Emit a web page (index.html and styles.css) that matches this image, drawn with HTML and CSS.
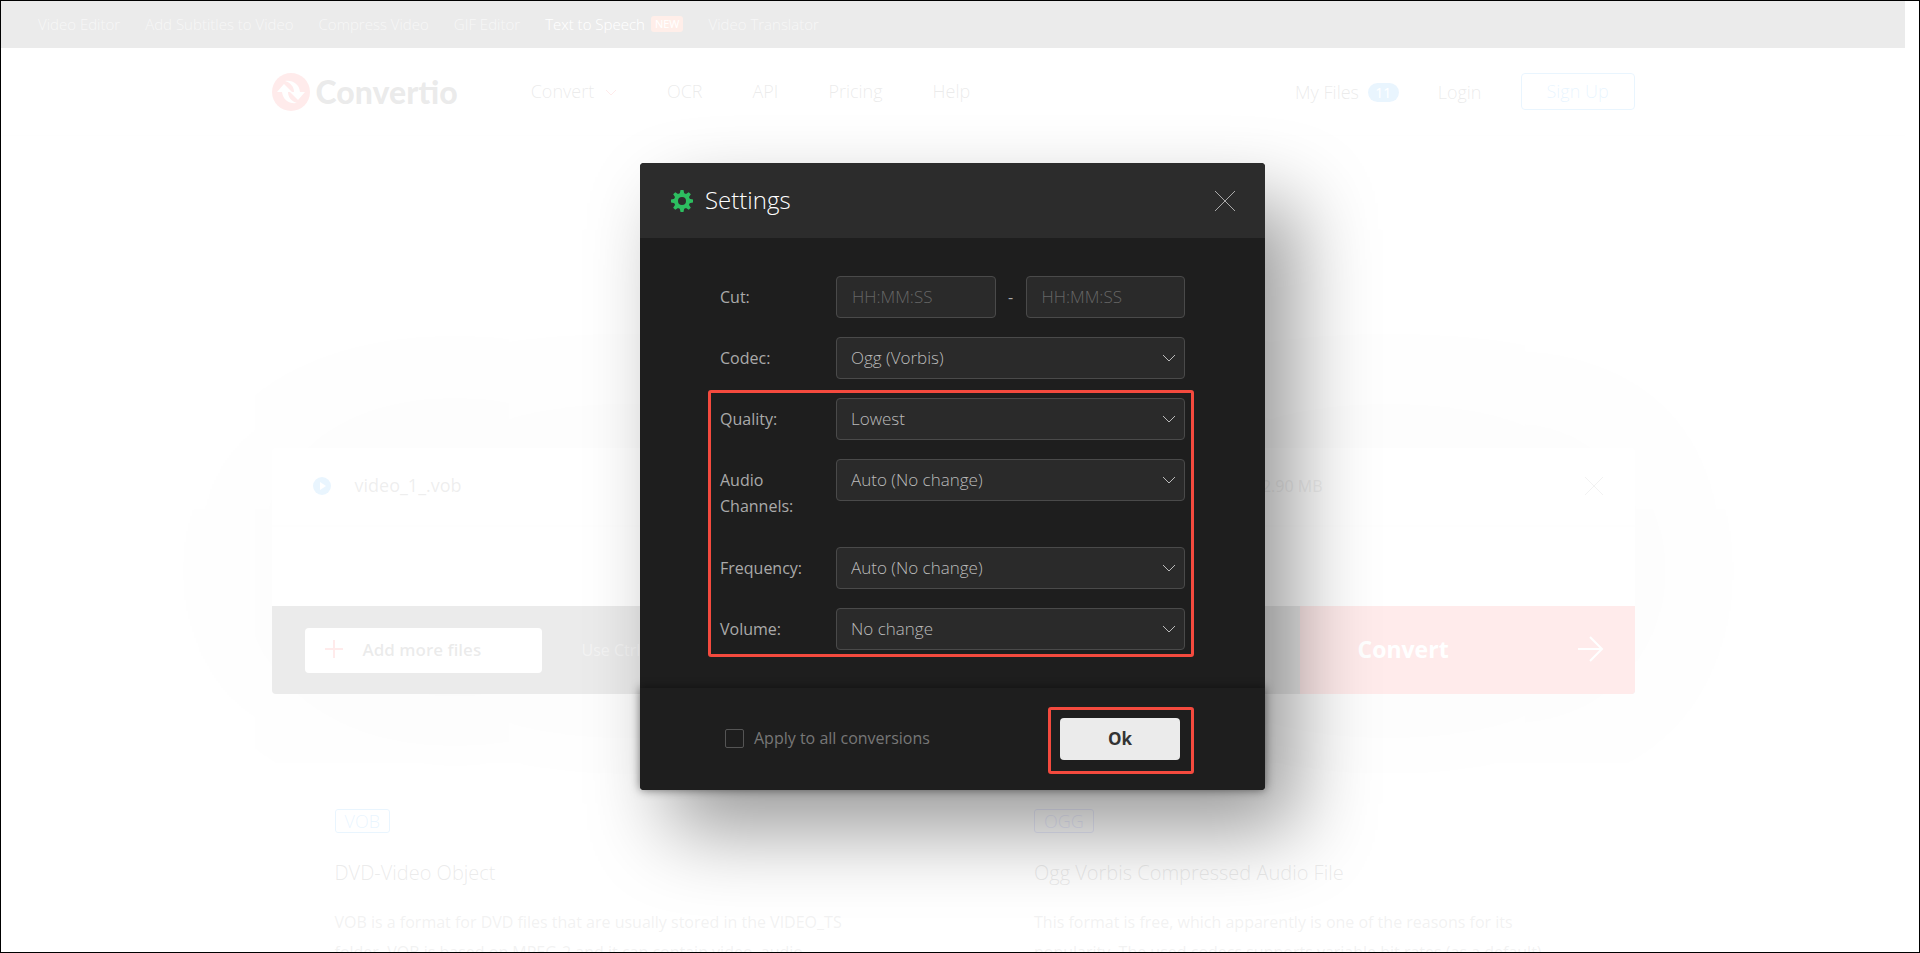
FILE: index.html
```html
<!DOCTYPE html>
<html lang="en">
<head>
  <meta charset="UTF-8">
  <title>VOB to OGG - Convertio</title>
  <link rel="stylesheet" href="styles.css">
</head>
<body>
  <div class="frame">
    <div class="page">
      <!-- Top bar -->
      <nav class="topbar">
        <a href="#">Video Editor</a>
        <a href="#">Add Subtitles to Video</a>
        <a href="#">Compress Video</a>
        <a href="#">GIF Editor</a>
        <a href="#" class="active">Text to Speech <span class="new">NEW</span></a>
        <a href="#">Video Translator</a>
      </nav>

      <!-- Header -->
      <header class="header">
        <div class="container header-row">
          <a href="#" class="logo">
            <svg width="38" height="38" viewBox="0 0 38 38">
              <circle cx="19" cy="19" r="19" fill="#ff3333"/>
              <path fill="#fff" d="M13 8c8-1 14 3 15 11h5l-7 8-8-8h4c0-5-3-9-9-11z"/>
              <path fill="#fff" d="M25 30c-8 1-14-3-15-11H5l7-8 8 8h-4c0 5 3 9 9 11z"/>
            </svg>
            <span>Convertio</span>
          </a>
          <nav class="menu">
            <a href="#">Convert
              <svg width="12" height="8" viewBox="0 0 12 8"><path d="M1 1l5 5 5-5" fill="none" stroke="#ff3333"/></svg>
            </a>
            <a href="#">OCR</a>
            <a href="#">API</a>
            <a href="#">Pricing</a>
            <a href="#">Help</a>
          </nav>
          <nav class="account">
            <a href="#">My Files <span class="count">11</span></a>
            <a href="#">Login</a>
            <a href="#" class="signup">Sign Up</a>
          </nav>
        </div>
      </header>

      <!-- File list -->
      <main class="container">
        <div class="files">
          <div class="file-row">
            <svg width="18" height="18" viewBox="0 0 18 18"><circle cx="9" cy="9" r="9" fill="#2196f3"/><path d="M7 5l6 4-6 4z" fill="#fff"/></svg>
            <span class="file-name">video_1_.vob</span>
            <span class="file-size">2.90 MB</span>
            <svg width="18" height="18" viewBox="0 0 18 18"><path d="M0 0l18 18M18 0L0 18" stroke="#777"/></svg>
          </div>
          <div class="file-space"></div>
          <div class="file-bar">
            <button class="add">
              <svg width="18" height="18" viewBox="0 0 18 18"><path d="M9 0v18M0 9h18" stroke="#ff3333" stroke-width="2"/></svg>
              Add more files
            </button>
            <span class="hint">Use Ctrl or Shift to add several files at once</span>
            <button class="convert">
              Convert
              <svg width="26" height="26" viewBox="0 0 26 26"><path d="M0 13h24M12 1l12 12-12 12" fill="none" stroke="#fff" stroke-width="2"/></svg>
            </button>
          </div>
        </div>

        <!-- Formats -->
        <div class="formats">
          <section class="format">
            <a href="#" class="tag">VOB</a>
            <h3>DVD-Video Object</h3>
            <p>VOB is a format for DVD files that are usually stored in the VIDEO_TS folder. VOB is based on MPEG-2 and it can contain video, audio,</p>
          </section>
          <section class="format">
            <a href="#" class="tag ogg">OGG</a>
            <h3>Ogg Vorbis Compressed Audio File</h3>
            <p>This format is free, which apparently is one of the reasons for its popularity. The used codecs supports variable bit rates (as a default)</p>
          </section>
        </div>
      </main>
    </div>

    <!-- Settings dialog -->
    <div class="overlay">
      <form class="modal">
        <div class="modal-header">
          <svg class="gear" width="22" height="22" viewBox="0 0 22 22">
            <g fill="#2dbe60">
              <path d="M9.5 0h3l1 5h-5zM9.5 22h3l1-5h-5zM0 9.5v3l5 1v-5zM22 9.5v3l-5 1v-5z"/>
              <path d="M9.5 0h3l1 5h-5zM9.5 22h3l1-5h-5zM0 9.5v3l5 1v-5zM22 9.5v3l-5 1v-5z" transform="rotate(45 11 11)"/>
            </g>
            <circle cx="11" cy="11" r="6" fill="none" stroke="#2dbe60" stroke-width="4"/>
          </svg>
          <h2>Settings</h2>
          <button type="button" class="close" aria-label="Close">
            <svg width="20" height="20" viewBox="0 0 20 20"><path d="M0 0l20 20M20 0L0 20" stroke="#aaa"/></svg>
          </button>
        </div>

        <div class="modal-body">
          <div class="row">
            <label for="cut-from">Cut:</label>
            <div class="cut">
              <input type="text" id="cut-from" placeholder="HH:MM:SS">
              <span>-</span>
              <input type="text" aria-label="Cut end" placeholder="HH:MM:SS">
            </div>
          </div>
          <div class="row">
            <label for="codec">Codec:</label>
            <div class="select">
              <select id="codec"><option>Ogg (Vorbis)</option></select>
              <svg width="14" height="8" viewBox="0 0 14 8"><path d="M1 1l6 6 6-6"/></svg>
            </div>
          </div>
          <div class="group">
            <div class="row">
              <label for="quality">Quality:</label>
              <div class="select">
                <select id="quality"><option>Lowest</option></select>
                <svg width="14" height="8" viewBox="0 0 14 8"><path d="M1 1l6 6 6-6"/></svg>
              </div>
            </div>
            <div class="row">
              <label for="channels">Audio Channels:</label>
              <div class="select">
                <select id="channels"><option>Auto (No change)</option></select>
                <svg width="14" height="8" viewBox="0 0 14 8"><path d="M1 1l6 6 6-6"/></svg>
              </div>
            </div>
            <div class="row">
              <label for="frequency">Frequency:</label>
              <div class="select">
                <select id="frequency"><option>Auto (No change)</option></select>
                <svg width="14" height="8" viewBox="0 0 14 8"><path d="M1 1l6 6 6-6"/></svg>
              </div>
            </div>
            <div class="row">
              <label for="volume">Volume:</label>
              <div class="select">
                <select id="volume"><option>No change</option></select>
                <svg width="14" height="8" viewBox="0 0 14 8"><path d="M1 1l6 6 6-6"/></svg>
              </div>
            </div>
          </div>
        </div>

        <div class="modal-footer">
          <label class="apply"><input type="checkbox"> Apply to all conversions</label>
          <div class="ok-box"><button type="button" class="ok">Ok</button></div>
        </div>
      </form>
    </div>
  </div>
</body>
</html>
```
FILE: styles.css
```css
* {
  box-sizing: border-box;
}

body {
  margin: 0;
  font-family: "Open Sans", sans-serif;
  font-size: 16px;
  color: #333;
  background: #fff;
}

a {
  color: inherit;
  text-decoration: none;
}

button,
input,
select {
  font-family: inherit;
}

.frame {
  position: relative;
  height: 100vh;
  border: 1px solid #000;
  overflow: hidden;
}

.page {
  margin-right: 14px;
}

.container {
  max-width: 1363px;
  margin: 0 auto;
}

/* top bar */
.topbar {
  display: flex;
  align-items: center;
  gap: 25px;
  height: 47px;
  padding: 0 37px 2px;
  background: #333;
  color: #aaa;
  font-size: 15px;
  font-weight: 300;
}

.topbar .active {
  color: #fff;
  display: flex;
  align-items: center;
  gap: 6px;
}

.new {
  padding: 0 4px;
  border-radius: 3px;
  background: #ff5722;
  font-size: 11px;
  font-weight: 400;
  line-height: 16px;
}

/* header */
.header {
  border-bottom: 1px solid #eee;
}

.header-row {
  display: flex;
  align-items: center;
  height: 87px;
  font-size: 18px;
  font-weight: 300;
}

.logo {
  display: flex;
  align-items: center;
  gap: 6px;
  font-family: Lato, sans-serif;
  font-size: 32px;
  font-weight: 900;
}

.menu {
  display: flex;
  gap: 50px;
  margin-left: 73px;
  padding-bottom: 2px;
}

.menu svg {
  margin-left: 6px;
  vertical-align: 1px;
}

.account {
  display: flex;
  align-items: center;
  gap: 39px;
  margin-left: auto;
}

.count {
  display: inline-block;
  width: 31px;
  margin-left: 4px;
  border-radius: 10px;
  background: #2196f3;
  color: #fff;
  font-size: 14px;
  font-weight: 400;
  line-height: 19px;
  text-align: center;
  vertical-align: 1px;
}

.signup {
  width: 114px;
  border: 1px solid #2196f3;
  border-radius: 4px;
  color: #2196f3;
  line-height: 35px;
  text-align: center;
}

/* file list */
.files {
  margin-top: 312px;
  border-radius: 4px;
  background: #fff;
  box-shadow: 0 0 220px rgba(0, 0, 0, 0.25);
}

.file-row {
  display: flex;
  align-items: center;
  height: 79px;
  padding: 0 32px 2px 41px;
  border-bottom: 2px solid #f2f2f2;
}

.file-name {
  margin-left: 24px;
  padding-bottom: 2px;
  color: #555;
  font-size: 18px;
}

.file-size {
  margin-left: auto;
  margin-right: 262px;
  color: #777;
}

.file-space {
  height: 79px;
  background: #f9f9f9;
}

.file-bar {
  display: flex;
  align-items: center;
  height: 88px;
  border-radius: 0 0 4px 4px;
  background: #333;
  overflow: hidden;
}

.add {
  display: flex;
  align-items: center;
  gap: 20px;
  width: 237px;
  height: 45px;
  margin-left: 33px;
  padding: 0 20px 2px;
  border: 0;
  border-radius: 4px;
  background: #fff;
  color: #333;
  font-size: 17px;
  font-weight: 600;
}

.hint {
  margin-left: 40px;
  color: #888;
}

.convert {
  display: flex;
  align-items: center;
  justify-content: space-between;
  width: 335px;
  height: 88px;
  margin-left: auto;
  padding: 0 31px 2px 58px;
  border: 0;
  background: #ff3333;
  color: #fff;
  font-size: 23px;
  font-weight: 700;
}

/* formats */
.formats {
  display: grid;
  grid-template-columns: 1fr 1fr;
  gap: 36px;
  margin-top: 96px;
}

.format {
  height: 240px;
  padding: 19px 70px 0 63px;
  background: #fff;
}

.tag {
  display: inline-block;
  padding: 0 9px;
  border: 1px solid #2196f3;
  border-radius: 3px;
  color: #2196f3;
  font-size: 18px;
  font-weight: 300;
  line-height: 22px;
}

.ogg {
  border-color: #3f51f5;
  color: #3f51f5;
}

.format h3 {
  margin: 22px 0 16px;
  font-size: 20px;
  font-weight: 300;
  line-height: 36px;
}

.format p {
  margin: 0;
  color: #777;
  line-height: 30px;
}

/* settings dialog */
.overlay {
  position: absolute;
  inset: 0;
  display: flex;
  align-items: center;
  justify-content: center;
  padding-right: 15px;
  background: rgba(255, 255, 255, 0.9);
}

.modal {
  width: 625px;
  border-radius: 4px;
  background: #1e1e1e;
  box-shadow: 30px 40px 80px rgba(0, 0, 0, 0.4);
  color: #aaa;
}

.modal-header {
  display: flex;
  align-items: center;
  height: 75px;
  padding: 0 30px 0 31px;
  border-radius: 4px 4px 0 0;
  background: #2c2c2c;
}

.modal-header h2 {
  margin: 0 auto 0 12px;
  padding-bottom: 2px;
  color: #fff;
  font-size: 24px;
  font-weight: 300;
}

.close {
  display: flex;
  padding: 0;
  border: 0;
  background: none;
}

.modal-body {
  padding: 38px 80px 19px;
}

.row {
  display: grid;
  grid-template-columns: 116px 1fr;
  align-items: start;
  margin-bottom: 19px;
}

.row label {
  padding: 8px 20px 9px 0;
  line-height: 26px;
}

/* one-line labels keep the height of the field */
.row label,
.cut,
.select {
  min-height: 42px;
}

.row:not(:has(#channels)) label {
  padding-bottom: 8px;
}

.cut {
  display: grid;
  grid-template-columns: 1fr 30px 1fr;
  align-items: center;
  text-align: center;
}

.cut input,
.select select {
  width: 100%;
  height: 42px;
  padding: 0 14px 2px;
  border: 1px solid #4a4a4a;
  border-radius: 4px;
  background: #2a2a2a;
  color: #bbb;
  font-size: 17px;
  font-weight: 300;
}

.cut input {
  padding-left: 15px;
}

.cut input::placeholder {
  color: #666;
}

.select {
  position: relative;
}

.select select {
  display: block;
  appearance: none;
}

.select svg {
  position: absolute;
  top: 17px;
  right: 9px;
  fill: none;
  stroke: #bbb;
  pointer-events: none;
}

/* red frame round the last four fields */
.group {
  position: relative;
}

.group::after {
  content: "";
  position: absolute;
  inset: -8px -9px -7px -12px;
  border: 3px solid #f44a3e;
  border-radius: 3px;
  pointer-events: none;
}

.modal-footer {
  display: flex;
  align-items: flex-start;
  justify-content: space-between;
  height: 102px;
  padding: 19px 71px 0 85px;
  border-radius: 0 0 4px 4px;
  background: #1e1e1e;
  box-shadow: 0 0 10px rgba(0, 0, 0, 0.5);
}

.apply {
  display: flex;
  align-items: center;
  gap: 10px;
  padding-top: 18px;
  color: #777;
  line-height: 26px;
}

.apply input {
  appearance: none;
  width: 19px;
  height: 19px;
  margin: 0;
  border: 1px solid #555;
  border-radius: 2px;
}

.ok-box {
  padding: 8px 11px 11px 9px;
  border: 3px solid #f44a3e;
  border-radius: 3px;
}

.ok {
  display: block;
  width: 120px;
  height: 42px;
  padding: 0 0 2px;
  border: 0;
  border-radius: 4px;
  background: #ebebeb;
  color: #333;
  font-size: 17px;
  font-weight: 700;
}
```
